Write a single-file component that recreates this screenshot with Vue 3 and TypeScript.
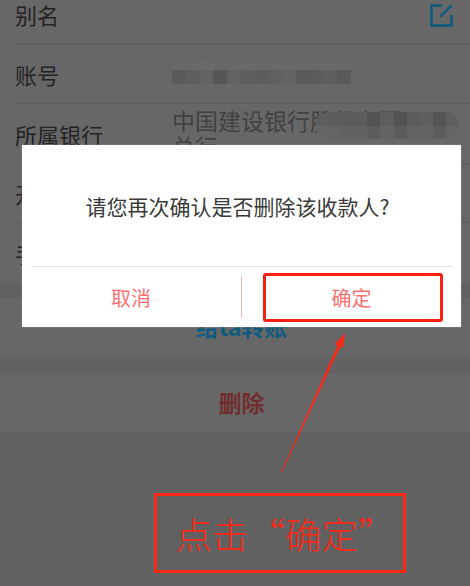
<script setup lang="ts">
const accountTop = ['#696969','#696969','#6a6a6a','#686868','#696969','#696969','#686868','#696969','#696969','#686868','#696969','#696969','#696969']
const accountBottom = ['#5a5a5a','#5f5f5f','#636363','#565656','#626262','#5f5f5f','#5d5d5d','#606060','#636363','#5a5a5a','#5c5c5c','#5f5f5f','#5a5a5a']
const bankTop = ['#5e5e5e','#5d5d5d','#5c5c5c','#5c5c5c','#535353','#5e5e5e','#525252','#5c5c5c','#5f5f5f','#545454','#5f5f5f']
const bankBottom = ['#656565','#646464','#616161','#616161','#5d5d5d','#636363','#5c5c5c','#626262','#636363','#5d5d5d','#646464']
</script>

<template>
  <div class="page">
    <section class="list">
      <div class="row first">
        <span class="label">别名</span>
        <svg class="edit" viewBox="0 0 24 24" fill="none" aria-hidden="true">
          <path d="M12.5 1.5H1.5V22.5H22.5V11.5" />
          <path d="M10.5 13.5L22.5 1.5" />
        </svg>
      </div>
      <div class="row">
        <span class="label">账号</span>
        <div class="mosaic account">
          <div class="mosaic-row low">
            <i v-for="(c, i) in accountTop" :key="i" :style="{ background: c }"></i>
          </div>
          <div class="mosaic-row">
            <i v-for="(c, i) in accountBottom" :key="i" :style="{ background: c }"></i>
          </div>
        </div>
      </div>
      <div class="row bank">
        <span class="label">所属银行</span>
        <div class="value">中国建设银行股份有限公司<br />总行</div>
        <div class="mosaic bank-mosaic">
          <div class="mosaic-row">
            <i v-for="(c, i) in bankTop" :key="i" :style="{ background: c }"></i>
          </div>
          <div class="mosaic-row">
            <i v-for="(c, i) in bankBottom" :key="i" :style="{ background: c }"></i>
          </div>
        </div>
      </div>
      <div class="row"><span class="label">开户地</span></div>
      <div class="row last"><span class="label">手机号</span></div>
    </section>

    <div class="action transfer">给ta转账</div>
    <div class="action remove">删除</div>

    <div class="dialog">
      <p class="message">请您再次确认是否删除该收款人?</p>
      <div class="buttons">
        <button class="btn cancel" type="button">取消</button>
        <span class="sep"></span>
        <button class="btn highlighted" type="button">确定</button>
      </div>
    </div>

    <svg class="arrow" viewBox="0 0 470 586" aria-hidden="true">
      <polygon points="281,472 337.1,346.4 335.4,343.4 344.8,333 343.4,347 339.9,347.6 282,472" />
    </svg>
    <div class="callout">点击“确定”</div>
  </div>
</template>

<style>
html, body { margin: 0; background: #616161; }
</style>

<style scoped>
.page {
  position: relative;
  width: 470px;
  height: 586px;
  overflow: hidden;
  background: #616161;
  font-family: "Noto Sans CJK SC", "Liberation Sans", sans-serif;
}
.list { background: #676767; padding-left: 15px; }
.row {
  position: relative;
  display: flex;
  align-items: center;
  height: 59.5px;
  border-bottom: 1px solid #5e5e5e;
  box-sizing: border-box;
}
.row.first {
  height: 44.5px;
  padding: 4px 17px 0 0;
  align-items: flex-start;
  justify-content: space-between;
}
.row.last { border-bottom: 0; }
.label { width: 158px; flex: none; font-size: 22px; color: #232323; line-height: 1; }
.first .label { margin-top: -1px; }
.edit { width: 23px; height: 23px; }
.edit path { stroke: #0d5a80; stroke-width: 2.6; }
.value { font-size: 23px; line-height: 26px; color: #414141; white-space: nowrap; margin: 0 0 0 -1px; }
.bank .label { margin-top: 1px; }
.mosaic { display: flex; flex-direction: column; }
.mosaic-row { display: flex; flex: 1; }
.mosaic-row i { flex: 1; }
.account { width: 179px; height: 22px; margin: -2px 0 0 -1px; filter: blur(.5px); }
.account .low { flex: 0 0 8px; }
.bank-mosaic {
  position: absolute;
  left: 300px;
  top: 8px;
  width: 144px;
  height: 27px;
  border-radius: 14px;
  overflow: hidden;
  filter: blur(.6px);
}
.action {
  display: flex;
  align-items: center;
  justify-content: center;
  height: 59px;
  padding-left: 13px;
  box-sizing: border-box;
  background: #676767;
  font-size: 23px;
  font-weight: 700;
}
.transfer { margin-top: 15px; padding-bottom: 3px; color: #0d5c7f; }
.remove { margin-top: 16px; color: #712d2d; }
.dialog {
  position: absolute;
  left: 22px;
  top: 145px;
  width: 439px;
  height: 182px;
  background: #fff;
  box-shadow: 0 0 1px #aaa;
  padding: 0 9px;
  box-sizing: border-box;
  display: flex;
  flex-direction: column;
}
.message {
  margin: 0;
  height: 121px;
  padding-right: 8px;
  display: flex;
  align-items: center;
  justify-content: center;
  font-size: 21px;
  color: #3a3a3a;
  border-bottom: 1px solid #e2e2e2;
  flex: none;
}
.buttons { flex: 1; display: flex; align-items: center; }
.btn {
  background: none;
  border: 0;
  padding: 0;
  font: inherit;
  font-size: 20px;
  color: #ff6f6f;
  height: 48px;
}
.cancel { flex: 0 0 200px; }
.sep { width: 1px; height: 42px; background: #f6b9b9; flex: none; margin: 0 21px 0 10px; }
.highlighted {
  flex: 0 0 180px;
  height: 49px;
  padding-right: 3px;
  border: 3px solid #fb1f12;
  border-radius: 3px;
  box-sizing: border-box;
}
.arrow { position: absolute; inset: 0; width: 470px; height: 586px; }
.arrow polygon { fill: #f9291a; }
.callout {
  position: absolute;
  left: 154px;
  top: 493px;
  width: 252px;
  height: 80px;
  padding-left: 10px;
  border: 3px solid #f9291a;
  box-sizing: border-box;
  display: flex;
  align-items: center;
  justify-content: center;
  font-size: 36.5px;
  font-weight: 300;
  color: #f9291a;
}
</style>
